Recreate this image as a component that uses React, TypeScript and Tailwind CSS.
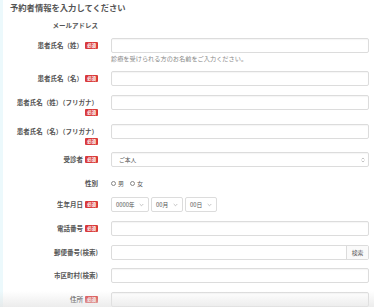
import React from "react";

const font = { fontFamily: '"Noto Sans CJK JP", "Noto Sans", sans-serif' };

function Badge() {
  return (
    <span className="inline-flex items-center justify-center bg-[#d93a3a] text-white text-[4.6px] font-bold leading-none w-[13px] h-[7px] rounded-[1px] ml-[2px] shrink-0">
      必須
    </span>
  );
}

function Label({ text, required, stacked }: { text: string; required?: boolean; stacked?: boolean }) {
  if (stacked) {
    return (
      <div className="w-[95px] shrink-0 flex flex-col items-end">
        <div className="h-[15px] flex items-center text-[6.5px] font-bold text-[#555] whitespace-nowrap">{text}</div>
        {required && (
          <div className="flex -mt-[1px]">
            <Badge />
          </div>
        )}
      </div>
    );
  }
  return (
    <div className="w-[95px] shrink-0 h-[15px] flex items-center justify-end text-[6.5px] font-bold text-[#555] whitespace-nowrap">
      {text}
      {required && <Badge />}
    </div>
  );
}

function Input({ children }: { children?: React.ReactNode }) {
  return (
    <div className="flex-1 w-full h-[15px] border border-[#dcdcdc] rounded-[2px] bg-white shadow-[inset_0_1px_1px_rgba(0,0,0,0.04)] flex items-center">
      {children}
    </div>
  );
}

function Row({
  label,
  required,
  stacked,
  className,
  children,
}: {
  label: string;
  required?: boolean;
  stacked?: boolean;
  className?: string;
  children: React.ReactNode;
}) {
  return (
    <div className={"flex items-start gap-[13px] pr-[5px] " + (className ?? "")}>
      <Label text={label} required={required} stacked={stacked} />
      {children}
    </div>
  );
}

function Chevron() {
  return (
    <svg width="5" height="4" viewBox="0 0 5 4" className="shrink-0">
      <path d="M0.7 1 L2.5 2.8 L4.3 1" fill="none" stroke="#aaa" strokeWidth="0.7" />
    </svg>
  );
}

function SmallSelect({ text, w }: { text: string; w: string }) {
  return (
    <div className={"h-[15px] border border-[#dcdcdc] rounded-[2px] bg-white flex items-center justify-between pl-[4px] pr-[4px] text-[5.8px] text-[#555] " + w}>
      <span>{text}</span>
      <Chevron />
    </div>
  );
}

function Radio({ text }: { text: string }) {
  return (
    <span className="flex items-center gap-[2px]">
      <span className="w-[5px] h-[5px] rounded-full border border-[#888] bg-white" />
      <span>{text}</span>
    </span>
  );
}

export default function App() {
  return (
    <div style={font} className="relative w-[374px] h-[307px] overflow-hidden bg-white flex leading-none">
      <div className="w-[3px] shrink-0 bg-[#ecf9fc]" />
      <div className="flex-1 flex flex-col">
        <div className="mt-[3px] ml-[7px] h-[10px] flex items-center text-[8.3px] font-bold text-[#555]">
          予約者情報を入力してください
        </div>

        <div className="mt-[9px] w-[95px] h-[10px] flex items-center justify-end text-[6.5px] font-bold text-[#555]">
          メールアドレス
        </div>

        <Row label="患者氏名（姓）" required className="mt-[9px]">
          <div className="flex-1 flex flex-col">
            <div className="h-[15px] border border-[#dcdcdc] rounded-[2px] bg-white shadow-[inset_0_1px_1px_rgba(0,0,0,0.04)]" />
            <div className="mt-[2px] h-[8px] flex items-center text-[6.2px] text-[#888]">
              診療を受けられる方のお名前をご入力ください。
            </div>
          </div>
        </Row>

        <Row label="患者氏名（名）" required className="mt-[8px]">
          <Input />
        </Row>

        <Row label="患者氏名（姓）（フリガナ）" required stacked className="mt-[9px]">
          <Input />
        </Row>

        <Row label="患者氏名（名）（フリガナ）" required stacked className="mt-[8px]">
          <Input />
        </Row>

        <Row label="受診者" required className="mt-[7px]">
          <Input>
            <div className="flex-1 flex items-center justify-between pl-[7px] pr-[3px] text-[5.8px] text-[#555]">
              <span>ご本人</span>
              <svg width="4" height="6" viewBox="0 0 4 6">
                <path d="M0.6 2.3 L2 1 L3.4 2.3 M0.6 3.7 L2 5 L3.4 3.7" fill="none" stroke="#999" strokeWidth="0.6" />
              </svg>
            </div>
          </Input>
        </Row>

        <Row label="性別" className="mt-[9px]">
          <div className="h-[15px] flex items-center gap-[6px] text-[6px] text-[#555]">
            <Radio text="男" />
            <Radio text="女" />
          </div>
        </Row>

        <Row label="生年月日" required className="mt-[6px]">
          <div className="flex gap-[2px]">
            <SmallSelect text="0000年" w="w-[38px]" />
            <SmallSelect text="00月" w="w-[32px]" />
            <SmallSelect text="00日" w="w-[32px]" />
          </div>
        </Row>

        <Row label="電話番号" required className="mt-[9px]">
          <Input />
        </Row>

        <Row label="郵便番号(検索)" className="mt-[9px]">
          <div className="flex-1 h-[15px] border border-[#dcdcdc] rounded-[2px] bg-white flex">
            <div className="flex-1" />
            <div className="w-[22px] border-l border-[#dcdcdc] bg-[#fafafa] flex items-center justify-center text-[5.8px] text-[#555]">
              検索
            </div>
          </div>
        </Row>

        <Row label="市区町村(検索)" className="mt-[8px]">
          <Input />
        </Row>

        <Row label="住所" required className="mt-[9px]">
          <Input />
        </Row>
      </div>
      <div className="absolute left-0 right-0 bottom-0 h-[16px] bg-gradient-to-b from-transparent to-[#e4e4e4]/70" />
    </div>
  );
}
